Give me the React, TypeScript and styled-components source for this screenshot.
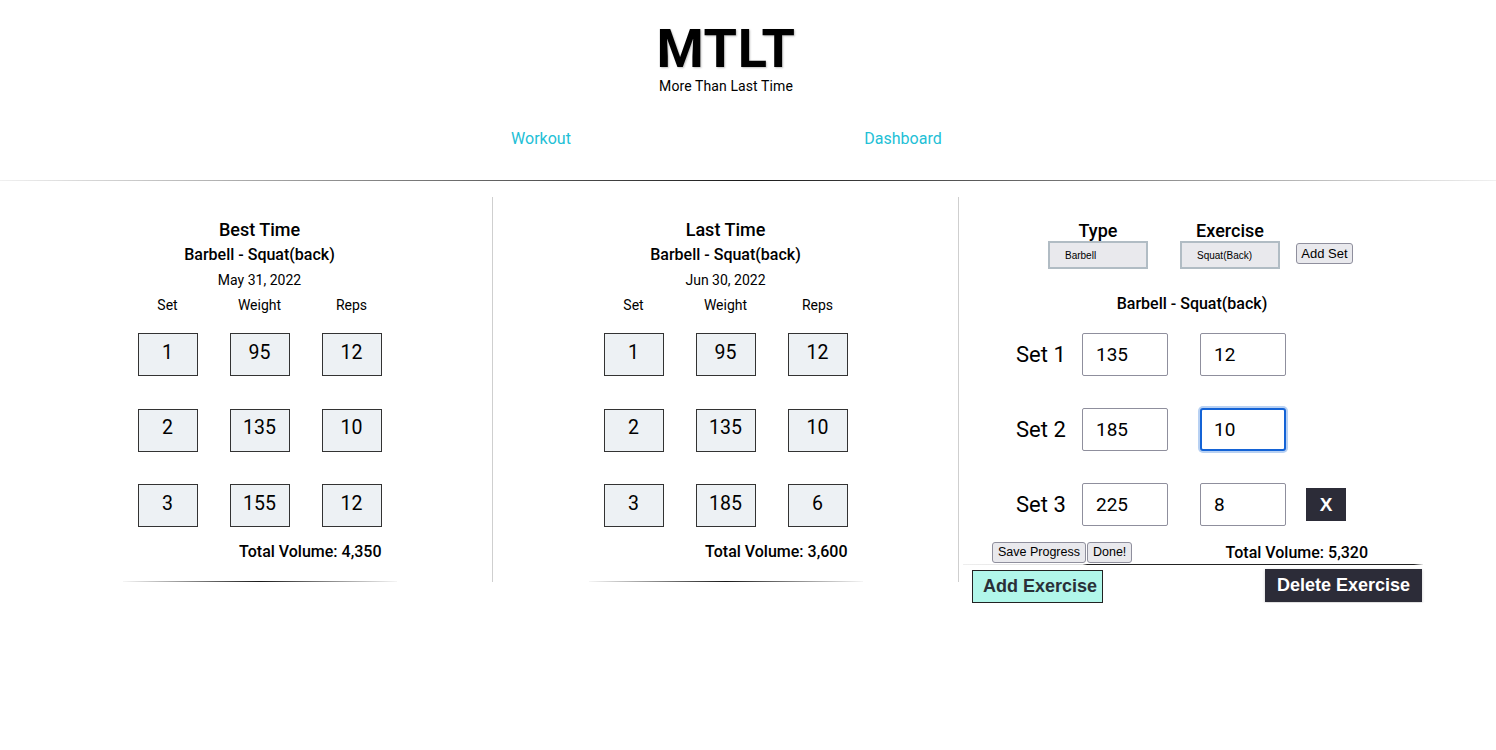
import React, { useEffect, useRef } from "react";
import styled, { createGlobalStyle } from "styled-components";

const Global = createGlobalStyle`
  html, body { margin: 0; padding: 0; background: #fff; }
  body { font-family: Roboto, "Noto Sans", Arial, sans-serif; color: #000; }
  * { box-sizing: border-box; }
`;

const Header = styled.header`
  width: 1398px;
  margin-left: 27px;
  padding-top: 23px;
  display: flex;
  flex-direction: column;
  align-items: center;
`;

const Logo = styled.h1`
  margin: 0;
  font-size: 54px;
  line-height: 52px;
  font-weight: 700;
  letter-spacing: 0.6px;
  text-shadow: 1px 1px 2px rgba(0, 0, 0, 0.25);
`;

const Tagline = styled.div`
  margin-top: 3px;
  font-size: 14px;
  line-height: 16px;
  letter-spacing: 0.1px;
`;

const Nav = styled.nav`
  align-self: flex-start;
  margin: 35px 0 0 333px;
  display: grid;
  grid-template-columns: 362px 362px;
`;

const NavLink = styled.a`
  text-align: center;
  font-size: 16px;
  line-height: 20px;
  color: #22c0d6;
  text-decoration: none;
`;

const Rule = styled.div`
  margin-top: 31px;
  height: 1px;
  width: 100%;
  background: linear-gradient(to right, rgba(0,0,0,0.06), rgba(0,0,0,0.9) 50%, rgba(0,0,0,0.06));
`;

const Columns = styled.main`
  margin: 16px 0 0 27px;
  display: flex;
  align-items: flex-start;
`;

const Column = styled.section<{ $divider?: boolean }>`
  width: 466px;
  display: flex;
  flex-direction: column;
  align-items: center;
  padding-top: 22px;
  border-right: ${(p) => (p.$divider ? "1px solid #cfcfcf" : "none")};
`;

const ColTitle = styled.h2`
  margin: 0;
  font-size: 18px;
  line-height: 22px;
  font-weight: 500;
`;

const ExerciseName = styled.h3<{ $top?: number }>`
  margin: ${(p) => p.$top ?? 4}px 0 0;
  font-size: 16px;
  line-height: 20px;
  font-weight: 500;
  text-align: center;
`;

const DateText = styled.div`
  margin-top: 6px;
  font-size: 14px;
  line-height: 18px;
`;

const Grid = styled.div<{ $top: number; $rowGap?: number }>`
  margin-top: ${(p) => p.$top}px;
  display: grid;
  grid-template-columns: repeat(3, 60px);
  column-gap: 32px;
  row-gap: ${(p) => p.$rowGap ?? 0}px;
`;

const HeadCell = styled.div`
  text-align: center;
  font-size: 14px;
  line-height: 18px;
`;

const Cell = styled.div`
  height: 43px;
  border: 1px solid #333;
  background: #edf1f4;
  display: flex;
  align-items: center;
  justify-content: center;
  padding-bottom: 5px;
  font-size: 19.5px;
`;

const Total = styled.div`
  margin-top: 15px;
  width: 244px;
  text-align: right;
  font-size: 16px;
  line-height: 20px;
  font-weight: 500;
`;

const FadeLine = styled.div`
  margin-top: 19px;
  width: 274px;
  height: 1px;
  background: linear-gradient(to right, rgba(0,0,0,0.04), rgba(0,0,0,0.9) 50%, rgba(0,0,0,0.04));
`;

/* ---- editor column ---- */

const Editor = styled.section`
  width: 466px;
  padding-top: 24px;
  display: flex;
  flex-direction: column;
`;

const Controls = styled.div`
  display: flex;
  align-items: flex-start;
  padding-left: 89px;
`;

const Field = styled.div<{ $gap?: number }>`
  width: 100px;
  margin-left: ${(p) => p.$gap ?? 0}px;
  display: flex;
  flex-direction: column;
  align-items: center;
`;

const FieldLabel = styled.label`
  font-size: 18px;
  line-height: 20px;
  font-weight: 500;
`;

const Select = styled.select`
  appearance: none;
  -webkit-appearance: none;
  width: 100px;
  height: 28px;
  border: 2px solid #b1bcc4;
  border-radius: 0;
  background: #e9e9ed;
  padding: 0 0 0 15px;
  font-family: "Liberation Sans", Arial, sans-serif;
  font-size: 10px;
  color: #000;
  outline: none;
`;

const SmallButton = styled.button<{ $size?: number }>`
  height: 21px;
  padding: 0 5px;
  border: 1px solid #8f8f9d;
  border-radius: 3px;
  background: #e9e9ed;
  font-family: "Liberation Sans", Arial, sans-serif;
  font-size: ${(p) => p.$size ?? 13}px;
  color: #000;
  line-height: 19px;
  cursor: pointer;
`;

const AddSet = styled(SmallButton)`
  margin: 22px 0 0 16px;
  width: 57px;
  padding: 0;
`;

const SetRows = styled.div`
  margin-top: 19px;
  display: flex;
  flex-direction: column;
  gap: 32px;
`;

const SetRow = styled.div`
  height: 43px;
  display: flex;
  align-items: center;
  padding-left: 57px;
`;

const SetLabel = styled.div`
  width: 66px;
  font-size: 22px;
  line-height: 26px;
`;

const NumInput = styled.input<{ $gap?: number; $active?: boolean }>`
  width: 86px;
  height: 43px;
  margin-left: ${(p) => p.$gap ?? 0}px;
  padding: 0 0 0 ${(p) => (p.$active ? 12 : 13)}px;
  border: ${(p) => (p.$active ? "2px solid #1463d6" : "1px solid #8f8f9d")};
  border-radius: ${(p) => (p.$active ? 3 : 2)}px;
  box-shadow: ${(p) => (p.$active ? "0 0 0 2px #b8d1f3" : "none")};
  background: #fff;
  font-family: Roboto, "Noto Sans", sans-serif;
  font-size: 19px;
  color: #000;
  outline: none;
`;

const RemoveButton = styled.button`
  margin-left: 20px;
  width: 40px;
  height: 33px;
  border: none;
  background: #2c2c38;
  color: #fff;
  font-family: "Liberation Sans", Arial, sans-serif;
  font-weight: 700;
  font-size: 19px;
  cursor: pointer;
`;

const Footer = styled.div`
  margin-top: 16px;
  height: 21px;
  display: flex;
  align-items: center;
  justify-content: space-between;
  padding: 0 57px 0 33px;
`;

const ButtonGroup = styled.div`
  display: flex;
  gap: 1px;
`;

const EditorTotal = styled.div`
  font-size: 16px;
  line-height: 20px;
  font-weight: 500;
`;

const EditorLine = styled.div`
  margin: 1px 0 0 4px;
  width: 460px;
  height: 1px;
  background: linear-gradient(to right, #eeeeee 0%, #dddddd 26%, #222 27%, #222 98%, #eeeeee 100%);
`;

const ActionRow = styled.div`
  margin-top: 5px;
  display: flex;
  justify-content: space-between;
  align-items: flex-start;
  padding: 0 3px 0 13px;
`;

const BigButton = styled.button<{ $variant: "add" | "delete" }>`
  height: 33px;
  padding: ${(p) => (p.$variant === "add" ? "0 5px 0 10px" : "0 12px")};
  margin-top: ${(p) => (p.$variant === "delete" ? -1.5 : 0)}px;
  border: ${(p) => (p.$variant === "add" ? "1px solid #222" : "none")};
  background: ${(p) => (p.$variant === "add" ? "#b1f7ea" : "#2c2c38")};
  color: ${(p) => (p.$variant === "add" ? "#2a3038" : "#fff")};
  font-family: "Liberation Sans", Arial, sans-serif;
  font-weight: 700;
  font-size: 18px;
  box-shadow: ${(p) => (p.$variant === "delete" ? "0 1px 3px rgba(0,0,0,0.2)" : "none")};
  cursor: pointer;
`;

type Row = [number, number, number];

const history = [
  {
    title: "Best Time",
    date: "May 31, 2022",
    rows: [
      [1, 95, 12],
      [2, 135, 10],
      [3, 155, 12],
    ] as Row[],
    total: "4,350",
  },
  {
    title: "Last Time",
    date: "Jun 30, 2022",
    rows: [
      [1, 95, 12],
      [2, 135, 10],
      [3, 185, 6],
    ] as Row[],
    total: "3,600",
  },
];

const current = [
  { weight: "135", reps: "12" },
  { weight: "185", reps: "10", active: true },
  { weight: "225", reps: "8", removable: true },
];

function HistoryColumn({ data }: { data: (typeof history)[number] }) {
  return (
    <Column $divider>
      <ColTitle>{data.title}</ColTitle>
      <ExerciseName>Barbell - Squat(back)</ExerciseName>
      <DateText>{data.date}</DateText>
      <Grid $top={7}>
        <HeadCell>Set</HeadCell>
        <HeadCell>Weight</HeadCell>
        <HeadCell>Reps</HeadCell>
      </Grid>
      <Grid $top={19} $rowGap={32.5}>
        {data.rows.map((r) => r.map((v, i) => <Cell key={`${r[0]}-${i}`}>{v}</Cell>))}
      </Grid>
      <Total>Total Volume: {data.total}</Total>
      <FadeLine />
    </Column>
  );
}

export default function App() {
  const activeRef = useRef<HTMLInputElement>(null);
  useEffect(() => {
    const el = activeRef.current;
    if (el) {
      el.focus();
      el.setSelectionRange(el.value.length, el.value.length);
    }
  }, []);

  return (
    <>
      <Global />
      <Header>
        <Logo>MTLT</Logo>
        <Tagline>More Than Last Time</Tagline>
        <Nav>
          <NavLink href="#">Workout</NavLink>
          <NavLink href="#">Dashboard</NavLink>
        </Nav>
      </Header>
      <Rule />
      <Columns>
        {history.map((h) => (
          <HistoryColumn key={h.title} data={h} />
        ))}
        <Editor>
          <Controls>
            <Field>
              <FieldLabel>Type</FieldLabel>
              <Select defaultValue="Barbell">
                <option>Barbell</option>
              </Select>
            </Field>
            <Field $gap={32}>
              <FieldLabel>Exercise</FieldLabel>
              <Select defaultValue="Squat(Back)">
                <option>Squat(Back)</option>
              </Select>
            </Field>
            <AddSet>Add Set</AddSet>
          </Controls>
          <ExerciseName $top={25}>Barbell - Squat(back)</ExerciseName>
          <SetRows>
            {current.map((s, i) => (
              <SetRow key={i}>
                <SetLabel>Set {i + 1}</SetLabel>
                <NumInput type="text" defaultValue={s.weight} />
                <NumInput
                  type="text"
                  $gap={32}
                  $active={s.active}
                  defaultValue={s.reps}
                  ref={s.active ? activeRef : undefined}
                />
                {s.removable && <RemoveButton>X</RemoveButton>}
              </SetRow>
            ))}
          </SetRows>
          <Footer>
            <ButtonGroup>
              <SmallButton $size={12.5}>Save Progress</SmallButton>
              <SmallButton $size={12.5}>Done!</SmallButton>
            </ButtonGroup>
            <EditorTotal>Total Volume: 5,320</EditorTotal>
          </Footer>
          <EditorLine />
          <ActionRow>
            <BigButton $variant="add">Add Exercise</BigButton>
            <BigButton $variant="delete">Delete Exercise</BigButton>
          </ActionRow>
        </Editor>
      </Columns>
    </>
  );
}
